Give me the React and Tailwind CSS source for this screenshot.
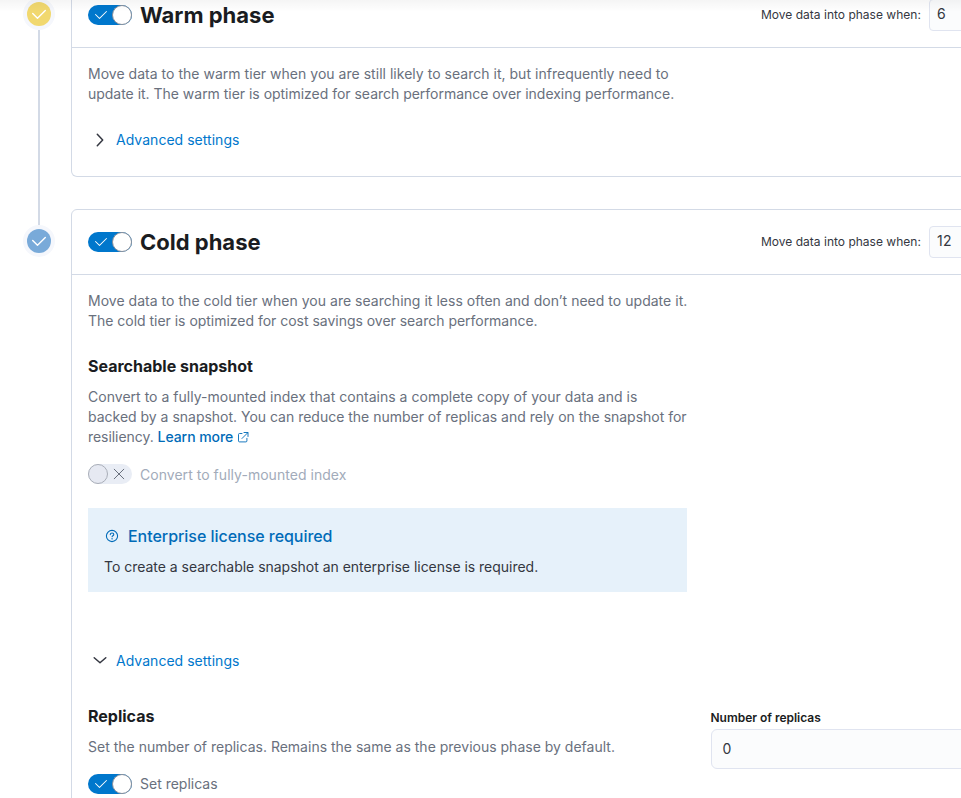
import React from "react";

const Check = ({ className }) => (
  <svg viewBox="0 0 16 16" width="16" height="16" className={className} fill="currentColor">
    <path d="M6.5 12a.502.502 0 01-.354-.146l-4-4a.502.502 0 01.708-.708L6.5 10.793l6.646-6.647a.502.502 0 01.708.708l-7 7A.502.502 0 016.5 12" />
  </svg>
);

const Toggle = () => (
  <button className="relative flex h-5 w-11 shrink-0 items-center rounded-full bg-[#0077cc]">
    <Check className="ml-[5px] text-white" />
    <span className="absolute top-0 right-0 size-5 rounded-full border border-[#8a909b] bg-white" />
  </button>
);

const DisabledToggle = () => (
  <button className="relative flex h-5 w-11 shrink-0 items-center justify-end rounded-full bg-[#e9edf5]">
    <span className="absolute top-0 left-0 size-5 rounded-full border border-[#a9aeb8] bg-[#e6e9f2]" />
    <svg viewBox="0 0 16 16" width="16" height="16" className="mr-[5px] text-[#69707d]" fill="none" stroke="currentColor">
      <path d="M3.2 3.2l9.6 9.6M12.8 3.2l-9.6 9.6" strokeLinecap="round" />
    </svg>
  </button>
);

const Badge = ({ color }) => (
  <div className="flex size-8 shrink-0 items-center justify-center rounded-full bg-[#f5f7fc]">
    <div className={`flex size-6 items-center justify-center rounded-full ${color}`}>
      <svg viewBox="0 0 16 16" width="16" height="16" fill="none" stroke="white" strokeWidth="1.4" strokeLinecap="round" strokeLinejoin="round">
        <path d="M1.7 7.4l4.8 4.8 7.8-7.7" />
      </svg>
    </div>
  </div>
);

const PhaseHeader = ({ title, value, className }) => (
  <div className={`flex shrink-0 items-center border-b border-[#d3dae6] pl-4 ${className}`}>
    <Toggle />
    <h2 className="ml-2 w-[621px] text-[22px] leading-8 font-bold text-[#1a1c21]">{title}</h2>
    <span className="w-[168px] shrink-0 text-xs tracking-[0.01px] whitespace-nowrap">Move data into phase when:</span>
    <div className="h-8 w-20 shrink-0 rounded-[4px] border border-[#e0e4f0] bg-[#fbfcfd] pl-[7px] text-sm leading-[27px] tracking-[0.3px]">{value}</div>
  </div>
);

const Advanced = ({ open, className }) => (
  <button className={`flex h-5 items-center pl-1 tracking-[0.03px] text-[#0077cc] ${className}`}>
    <svg viewBox="0 0 16 16" width="16" height="16" className="mr-2 text-[#343741]" fill="none" stroke="currentColor" strokeWidth="1.5" strokeLinecap="round" strokeLinejoin="round">
      <path d={open ? "M2.2 4.7l5.8 5.1 5.8-5.1" : "M5.3 2.3L10.7 8l-5.4 5.7"} />
    </svg>
    Advanced settings
  </button>
);

export default function App() {
  return (
    <div className="relative flex h-[798px] w-[961px] overflow-hidden bg-white font-['Inter',sans-serif] text-sm leading-5 text-[#343741]">
      <div className="-mt-0.5 flex w-[71px] shrink-0 flex-col items-center pl-[7px]">
        <Badge color="bg-[#f1d86f]" />
        <div className="h-[195px] w-0.5 bg-[#d3dae6]" />
        <Badge color="bg-[#79aad9]" />
      </div>

      <main className="flex w-[1000px] shrink-0 flex-col">
        <section className="h-[177px] shrink-0 rounded-b-[6px] border border-t-0 border-[#d3dae6]">
          <PhaseHeader title="Warm phase" value="6" className="h-12 pb-[17px]" />
          <div className="px-4 pt-4">
            <p className="whitespace-nowrap text-[#69707d]">
              <span className="tracking-[0.024px]">Move data to the warm tier when you are still likely to search it, but infrequently need to</span><br />
              <span className="tracking-[-0.022px]">update it. The warm tier is optimized for search performance over indexing performance.</span>
            </p>
            <Advanced className="mt-[26px]" />
          </div>
        </section>

        <section className="mt-8 h-[700px] shrink-0 rounded-t-[6px] border border-[#d3dae6]">
          <PhaseHeader title="Cold phase" value="12" className="h-[65px]" />
          <div className="px-4 pt-4">
            <p className="whitespace-nowrap text-[#69707d]">
              <span className="tracking-[0.027px]">Move data to the cold tier when you are searching it less often and don’t need to update it.</span><br />
              <span className="tracking-[-0.022px]">The cold tier is optimized for cost savings over search performance.</span>
            </p>
            <h3 className="mt-[23px] text-base leading-6 font-bold text-[#1a1c21]">Searchable snapshot</h3>
            <p className="mt-[9px] whitespace-nowrap text-[#69707d]">
              <span className="tracking-[0.024px]">Convert to a fully-mounted index that contains a complete copy of your data and is</span><br />
              <span className="tracking-[-0.01px]">backed by a snapshot. You can reduce the number of replicas and rely on the snapshot for</span><br />
              <span className="flex items-center tracking-[-0.05px]">
                resiliency.&nbsp;<a className="font-medium text-[#006bb8]">Learn more</a>
                <svg viewBox="0 0 12 12" width="12" height="12" className="ml-1 text-[#006bb8]" fill="none" stroke="currentColor" strokeWidth="0.9" strokeLinecap="round" strokeLinejoin="round">
                  <path d="M5 2.5H2.5a1 1 0 00-1 1v6.400a1 1 0 001 1h6.400a1 1 0 001-1V7.300M7 1.500h4v4M10.700 1.800L5 7.500" />
                </svg>
              </span>
            </p>
            <div className="mt-[17px] flex h-5 items-center gap-2 text-[#a2abba]">
              <DisabledToggle />
              <span className="pt-0.5 tracking-[0.035px]">Convert to fully-mounted index</span>
            </div>

            <div className="mt-6 h-[84px] w-[599px] bg-[#e6f1fa] px-4 pt-4">
              <div className="flex h-6 items-center text-base font-medium tracking-[-0.04px] text-[#006bb8]">
                <svg viewBox="0 0 16 16" width="16" height="16" className="mr-2" fill="none" stroke="currentColor" strokeWidth="1.1" strokeLinecap="round">
                  <circle cx="8" cy="8" r="5.6" />
                  <path d="M6.3 6.600c0-2.200 3.500-2.100 3.500 0 0 1.200-1.700 1.200-1.700 2.200" />
                  <circle cx="8.1" cy="10.8" r=".25" />
                </svg>
                Enterprise license required
              </div>
              <p className="mt-[9px] tracking-[-0.02px]">To create a searchable snapshot an enterprise license is required.</p>
            </div>

            <Advanced open className="mt-[59px]" />

            <div className="mt-[33px] flex">
              <div className="w-[622px] shrink-0">
                <h3 className="text-base leading-6 font-bold text-[#1a1c21]">Replicas</h3>
                <p className="mt-[9px] tracking-[0.003px] text-[#69707d]">Set the number of replicas. Remains the same as the previous phase by default.</p>
                <div className="mt-[17px] flex h-5 items-center gap-2 text-[#69707d]">
                  <Toggle />
                  <span>Set replicas</span>
                </div>
              </div>
              <div className="w-[350px] shrink-0 pt-[5px]">
                <label className="block h-5 pl-[0.5px] text-xs leading-[18px] font-semibold tracking-[-0.02px] text-[#1a1c21]">Number of replicas</label>
                <div className="ml-px h-10 rounded-[6px] border border-[#e0e4f0] bg-[#fbfcfd] pl-[10.5px] leading-[37px]">0</div>
              </div>
            </div>
          </div>
        </section>
      </main>
      <div className="absolute inset-x-0 top-0 h-3 bg-gradient-to-b from-black/4 to-transparent" />
    </div>
  );
}
